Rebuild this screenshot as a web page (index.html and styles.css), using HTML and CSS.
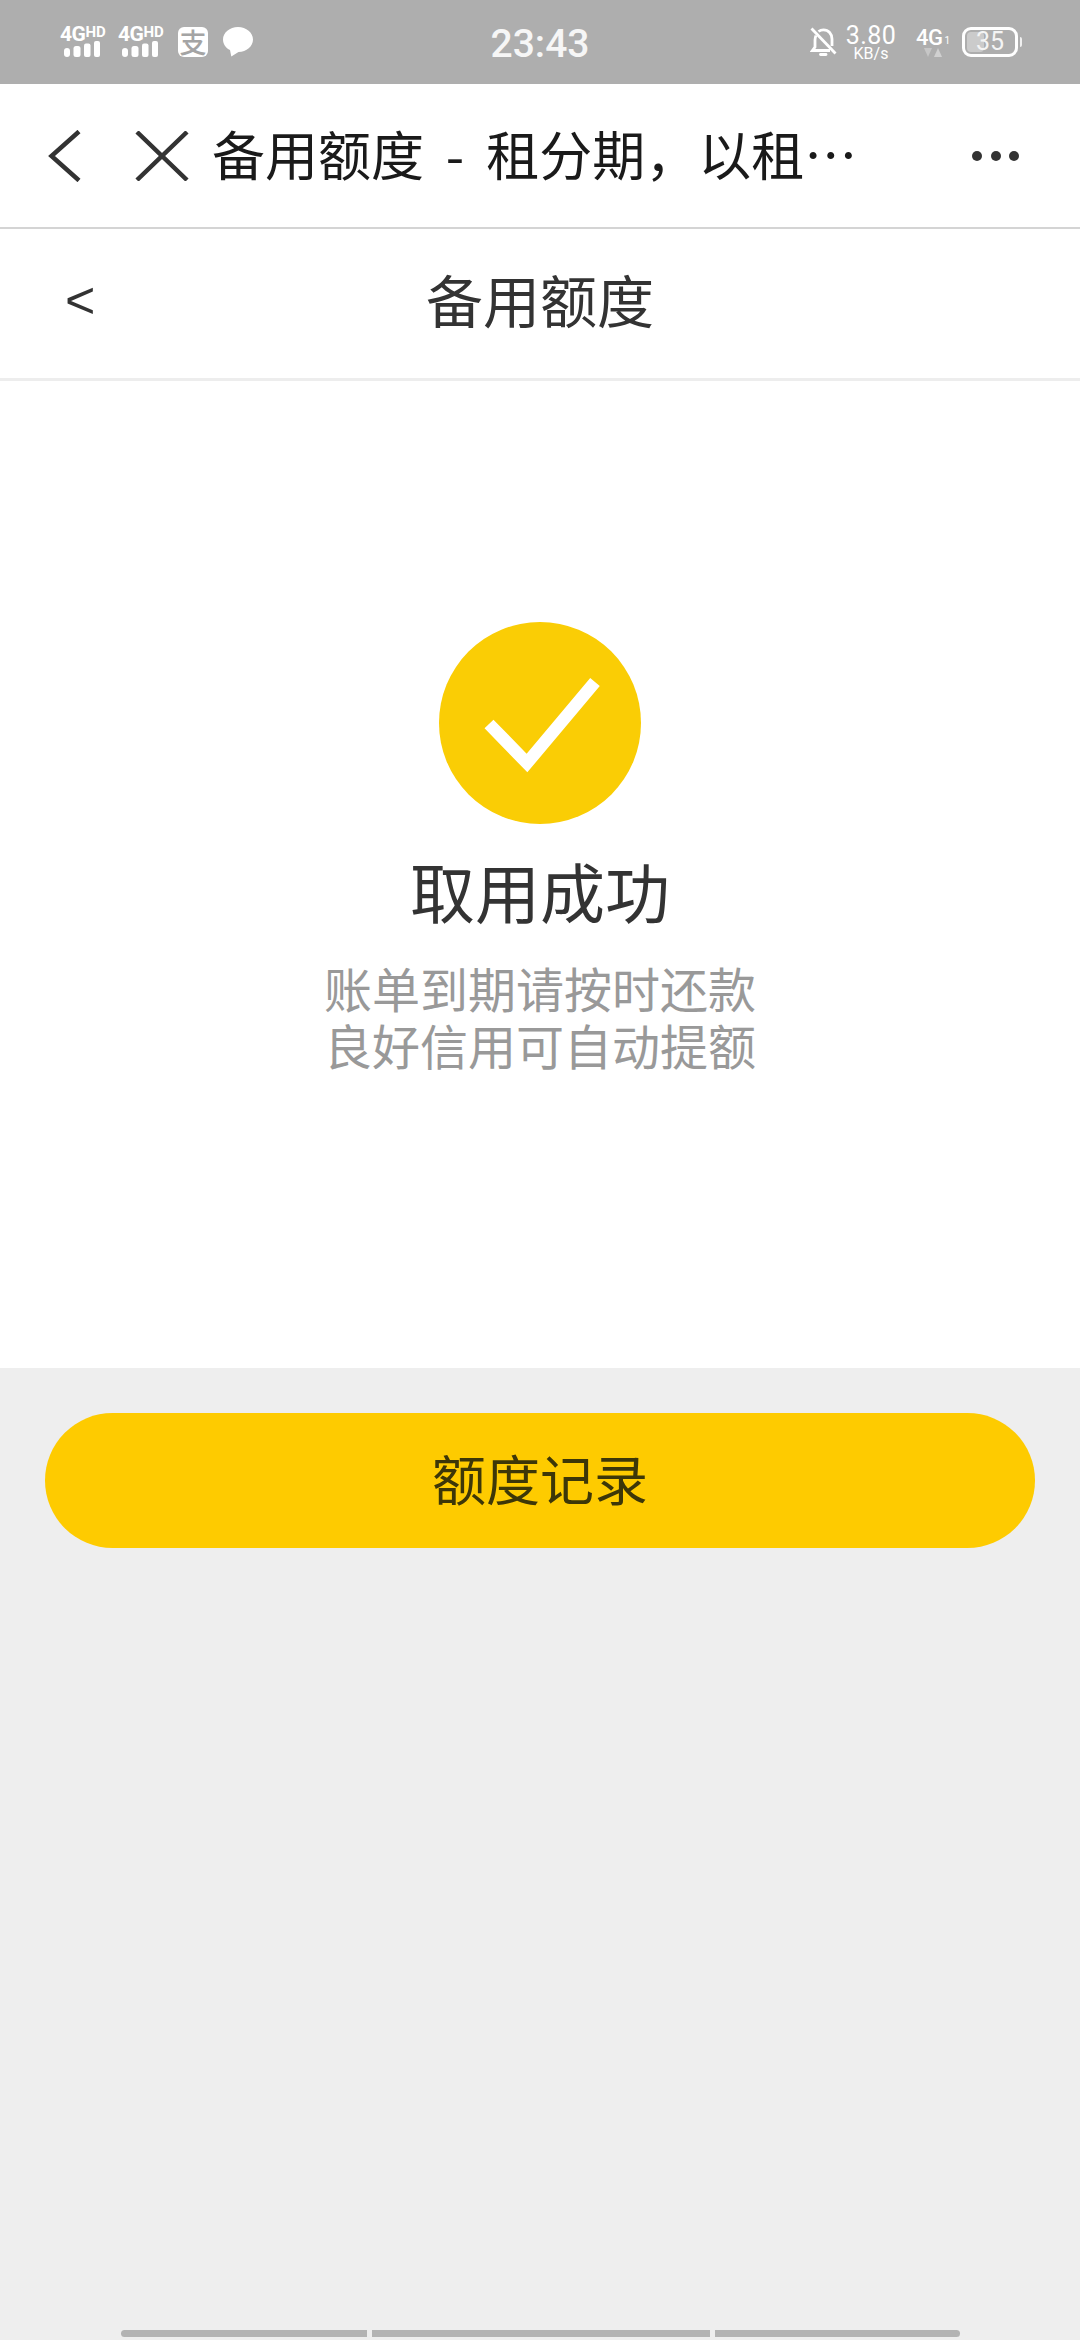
FILE: index.html
```html
<!DOCTYPE html>
<html>
<head>
<meta charset="utf-8">
<title>备用额度</title>
<link rel="stylesheet" href="styles.css">
</head>
<body>
  <div class="pantalla">
    <div class="estado">
      <div class="estado-izq">
        <div class="senal">
          <div class="senal-red"><span class="red-4g">4G</span><span class="red-hd">HD</span></div>
          <svg class="barras" width="36" height="16" viewBox="0 0 36 16"><rect x="0" y="7" width="6" height="9" rx="3"/><rect x="9.500" y="5" width="7" height="11" rx="2.500"/><rect x="20" y="2.500" width="6.500" height="13.500" rx="2"/><rect x="30" y="0" width="6" height="16" rx="2"/></svg>
        </div>
        <div class="senal">
          <div class="senal-red"><span class="red-4g">4G</span><span class="red-hd">HD</span></div>
          <svg class="barras" width="36" height="16" viewBox="0 0 36 16"><rect x="0" y="7" width="6" height="9" rx="3"/><rect x="9.500" y="5" width="7" height="11" rx="2.500"/><rect x="20" y="2.500" width="6.500" height="13.500" rx="2"/><rect x="30" y="0" width="6" height="16" rx="2"/></svg>
        </div>
        <div class="alipay">支</div>
        <svg class="chat" width="30" height="30" viewBox="0 0 30 30"><path d="M15 0C6.700 0 0 5.600 0 12.500 0 17 2.800 20.900 7 23.100L8.300 29.500 15.500 25C23.500 24.800 30 19.300 30 12.500 30 5.600 23.300 0 15 0Z" fill="#fff"/></svg>
      </div>
      <div class="hora">23:43</div>
      <div class="estado-der">
        <svg class="campana" width="27" height="30" viewBox="0 0 27 30" fill="none" stroke="#fff" stroke-width="2.800"><path d="M6 8.500C5.300 10 5 11.500 5 13V20L2.500 23.500H20"/><path d="M8.500 4.500C10 3.300 11.700 2.800 13.500 2.800 18.500 2.800 22 6.800 22 12V19"/><path d="M1.500 1.500 25.500 26.500"/><path d="M10.500 27.500H16" stroke-width="2.800" stroke-linecap="round"/></svg>
        <div class="velocidad"><span class="vel-num">3.80</span><span class="vel-uni">KB/s</span></div>
        <div class="red-datos">
          <div class="datos-top"><span class="datos-4g">4G</span><span class="datos-1">1</span></div>
          <svg class="datos-flechas" width="18" height="9" viewBox="0 0 18 9"><path d="M0 0H8L4 9Z" fill="#c6c6c6"/><path d="M10 9H18L14 0Z" fill="#d0d0d0"/></svg>
        </div>
        <div class="bateria">
          <div class="bateria-caja"><span class="bateria-nivel"></span><span class="bateria-num">35</span></div>
          <span class="bateria-punta"></span>
        </div>
      </div>
    </div>

    <div class="barra-web">
      <svg class="ico-atras" width="34" height="52" viewBox="0 0 34 52" fill="none" stroke="#333" stroke-width="4.500"><path d="M31 1.500 3.500 26 31 50.500"/></svg>
      <svg class="ico-cerrar" width="54" height="50" viewBox="0 0 54 50" fill="none" stroke="#333" stroke-width="4.500"><path d="M2 1 52 49M52 1 2 49"/></svg>
      <div class="web-titulo">备用额度 - 租分期，以租…</div>
      <div class="web-mas"><span></span><span></span><span></span></div>
    </div>

    <div class="cabecera">
      <span class="cab-atras">&lt;</span>
      <span class="cab-titulo">备用额度</span>
    </div>

    <div class="contenido">
      <svg class="ok" width="202" height="202" viewBox="0 0 202 202"><circle cx="101" cy="101" r="101" fill="#facd05"/><path d="M50 102 88 141 156 60" fill="none" stroke="#fff" stroke-width="12.500"/></svg>
      <h1 class="ok-titulo">取用成功</h1>
      <p class="ok-texto">账单到期请按时还款<br>良好信用可自动提额</p>
    </div>

    <div class="pie">
      <button class="boton">额度记录</button>
      <div class="indicador"><span class="ind-a"></span><span class="ind-b"></span><span class="ind-c"></span></div>
    </div>
  </div>
</body>
</html>
```

FILE: styles.css
```css
* {
  box-sizing: border-box;
}
body {
  margin: 0;
  font-family: "Noto Sans CJK SC", "Noto Sans", sans-serif;
  background-color: #eeeeee;
}
.pantalla {
  display: flex;
  flex-direction: column;
  width: 1080px;
  height: 2340px;
  overflow: hidden;
}

/* barra de estado */
.estado {
  display: grid;
  grid-template-columns: 1fr auto 1fr;
  align-items: center;
  height: 84px;
  background-color: #aeaeae;
  color: #fff;
  font-family: Roboto, sans-serif;
}
.estado-izq {
  display: flex;
  align-items: flex-start;
  padding-left: 60px;
}
.senal {
  display: flex;
  flex-direction: column;
  align-items: flex-end;
  width: 46px;
  margin-right: 12px;
}
.senal-red {
  display: flex;
  align-items: flex-start;
  width: 46px;
  height: 15px;
  line-height: 15px;
  font-weight: 700;
}
.red-4g {
  font-size: 21px;
  letter-spacing: -0.5px;
}
.red-hd {
  font-size: 15px;
  line-height: 10px;
  letter-spacing: 0;
}
.barras {
  display: block;
  flex: none;
  fill: #fff;
  margin-top: -1px;
  margin-right: 6px;
}
.alipay {
  width: 30px;
  height: 30px;
  margin-left: 2px;
  margin-right: 15px;
  border-radius: 6px;
  background-color: #fff;
  color: #a4a4a4;
  font-size: 27px;
  font-weight: 500;
  line-height: 29px;
  text-align: center;
  font-family: "Noto Sans CJK SC", sans-serif;
}
.chat {
  display: block;
}
.hora {
  padding-top: 4px;
  font-size: 39px;
  font-weight: 500;
  color: #f6f6f6;
}
.estado-der {
  display: flex;
  align-items: center;
  justify-content: flex-end;
  padding-right: 58px;
}
.campana {
  display: block;
  margin-right: 8px;
}
.velocidad {
  display: flex;
  flex-direction: column;
  align-items: center;
  width: 52px;
  margin-right: 19px;
}
.vel-num {
  font-size: 25px;
  line-height: 22px;
  letter-spacing: 0.5px;
}
.vel-uni {
  margin-top: 1px;
  font-size: 16px;
  line-height: 12px;
}
.red-datos {
  display: flex;
  flex-direction: column;
  align-items: center;
  width: 34px;
  margin-right: 12px;
}
.datos-top {
  display: flex;
  align-items: flex-end;
  height: 21px;
  line-height: 21px;
}
.datos-4g {
  font-size: 22px;
  font-weight: 500;
  letter-spacing: -0.5px;
}
.datos-1 {
  font-size: 10px;
  line-height: 14px;
  margin-left: 2px;
}
.datos-flechas {
  display: block;
}
.bateria {
  display: flex;
  align-items: center;
}
.bateria-caja {
  position: relative;
  display: flex;
  align-items: center;
  justify-content: center;
  width: 56px;
  height: 30px;
  border: 3px solid #fff;
  border-radius: 9px;
}
.bateria-nivel {
  position: absolute;
  left: 2px;
  top: 2px;
  bottom: 2px;
  width: 17px;
  border-radius: 4px;
  background-color: #cbcbcb;
}
.bateria-num {
  position: relative;
  font-size: 25px;
  line-height: 24px;
  color: #f4f4f4;
}
.bateria-punta {
  width: 2px;
  height: 10px;
  margin-left: 2px;
  background-color: #f0f0f0;
  border-radius: 0 2px 2px 0;
}

/* barra del navegador */
.barra-web {
  display: flex;
  align-items: center;
  height: 145px;
  padding-left: 48px;
  padding-right: 61px;
  background-color: #fff;
  border-bottom: 2px solid #d4d4d4;
}
.ico-atras {
  display: block;
  flex: none;
}
.ico-cerrar {
  display: block;
  flex: none;
  margin-left: 53px;
}
.web-titulo {
  flex: 1;
  margin-left: 23px;
  padding-bottom: 6px;
  font-size: 53px;
  line-height: 70px;
  word-spacing: 10px;
  color: #1a1a1a;
  white-space: nowrap;
}
.web-mas {
  display: flex;
  gap: 8.500px;
}
.web-mas span {
  width: 10px;
  height: 10px;
  border-radius: 50%;
  background-color: #333;
}

/* cabecera de la pagina */
.cabecera {
  position: relative;
  display: flex;
  align-items: center;
  justify-content: center;
  height: 152px;
  background-color: #fff;
  border-bottom: 3px solid #ededed;
}
.cab-atras {
  position: absolute;
  left: 65px;
  top: 41px;
  font-size: 52px;
  line-height: 60px;
  color: #333;
  font-family: "Liberation Sans", sans-serif;
}
.cab-titulo {
  padding-bottom: 11px;
  font-size: 57px;
  line-height: 80px;
  color: #333;
}

/* contenido */
.contenido {
  display: flex;
  flex-direction: column;
  align-items: center;
  height: 987px;
  padding-top: 241px;
  background-color: #fff;
}
.ok {
  display: block;
}
.ok-titulo {
  margin: 22px 0 0;
  font-size: 65px;
  font-weight: 400;
  line-height: 88px;
  color: #333;
}
.ok-texto {
  margin: 25px 0 0;
  font-size: 48px;
  line-height: 57px;
  color: #999;
  text-align: center;
}

/* pie */
.pie {
  flex: 1;
  display: flex;
  flex-direction: column;
  align-items: center;
  padding: 45px 45px 3px;
}
.boton {
  width: 990px;
  height: 135px;
  padding: 0 0 6px;
  border: none;
  border-radius: 68px;
  background-color: #fecb00;
  color: #3d3708;
  font-family: inherit;
  font-size: 54px;
}
.indicador {
  display: flex;
  gap: 5px;
  margin-top: auto;
}
.indicador span {
  height: 7px;
  background-color: #b3b3b3;
}
.ind-a {
  width: 246px;
  border-radius: 4px 0 0 4px;
}
.ind-b {
  width: 338px;
}
.ind-c {
  width: 245px;
  border-radius: 0 4px 4px 0;
}
```
